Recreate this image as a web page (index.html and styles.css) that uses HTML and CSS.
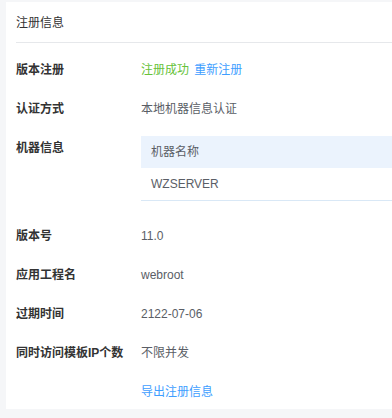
FILE: index.html
```html
<!DOCTYPE html>
<html lang="zh-CN">
<head>
    <meta charset="UTF-8">
    <meta name="viewport" content="width=device-width, initial-scale=1.0">
    <title>注册信息</title>
    <link rel="stylesheet" href="styles.css">
</head>
<body>

    <div class="panel">
        <div class="panel-title">注册信息</div>

        <div class="info">
            <div class="row">
                <div class="label">版本注册</div>
                <div class="value">
                    <span class="ok">注册成功</span>
                    <a class="link re-reg" href="#">重新注册</a>
                </div>
            </div>
            <div class="row">
                <div class="label">认证方式</div>
                <div class="value">本地机器信息认证</div>
            </div>
            <div class="row row-table">
                <div class="label">机器信息</div>
                <div class="value">
                    <table class="machine">
                        <thead>
                            <tr><th>机器名称</th></tr>
                        </thead>
                        <tbody>
                            <tr><td>WZSERVER</td></tr>
                        </tbody>
                    </table>
                </div>
            </div>
            <div class="row">
                <div class="label">版本号</div>
                <div class="value">11.0</div>
            </div>
            <div class="row">
                <div class="label">应用工程名</div>
                <div class="value">webroot</div>
            </div>
            <div class="row">
                <div class="label">过期时间</div>
                <div class="value">2122-07-06</div>
            </div>
            <div class="row">
                <div class="label">同时访问模板IP个数</div>
                <div class="value">不限并发</div>
            </div>
            <div class="row">
                <div class="label"></div>
                <div class="value"><a class="link" href="#">导出注册信息</a></div>
            </div>
        </div>
    </div>

    <div class="bottom-line"></div>

</body>
</html>
```

FILE: styles.css
```css
body {
    margin: 0;
    padding: 2px 0 0 6px;
    background-color: #f5f6f8;
    font-family: "Liberation Sans", Arial, "Noto Sans CJK SC", sans-serif;
    font-size: 12px;
    color: #5a5e66;
}
.panel {
    background: #fff;
    padding: 0 0 7px 10px;
}
.panel-title {
    line-height: 20px;
    padding: 11px 0 9px;
    border-bottom: 1px solid #e6e8eb;
    color: #333;
}
.info {
    padding-top: 17px;
}
.row {
    display: flex;
    align-items: flex-start;
    line-height: 20px;
    margin-bottom: 19px;
}
.row:last-child {
    margin-bottom: 0;
}
.label {
    width: 125px;
    flex-shrink: 0;
    font-weight: bold;
    color: #333;
}
.value {
    flex: 1;
}
.ok { color: #67c23a; }
.link {
    color: #409eff;
    text-decoration: none;
}
.re-reg { margin-left: 2px; }
.row-table {
    margin-bottom: 25px;
}
.row-table .value {
    margin-top: -2px;
}
.machine {
    width: 100%;
    border-collapse: collapse;
}
.machine th, .machine td {
    text-align: left;
    font-weight: normal;
    padding: 6px 10px;
    height: 20px;
    color: #5a5e66;
}
.machine th {
    background: #ebf3fd;
}
.machine td {
    border-bottom: 1px solid #d9e8f6;
}
.bottom-line {
    margin: 10px 0 0 -6px;
    height: 1px;
    background: #e2e4e8;
}
```
